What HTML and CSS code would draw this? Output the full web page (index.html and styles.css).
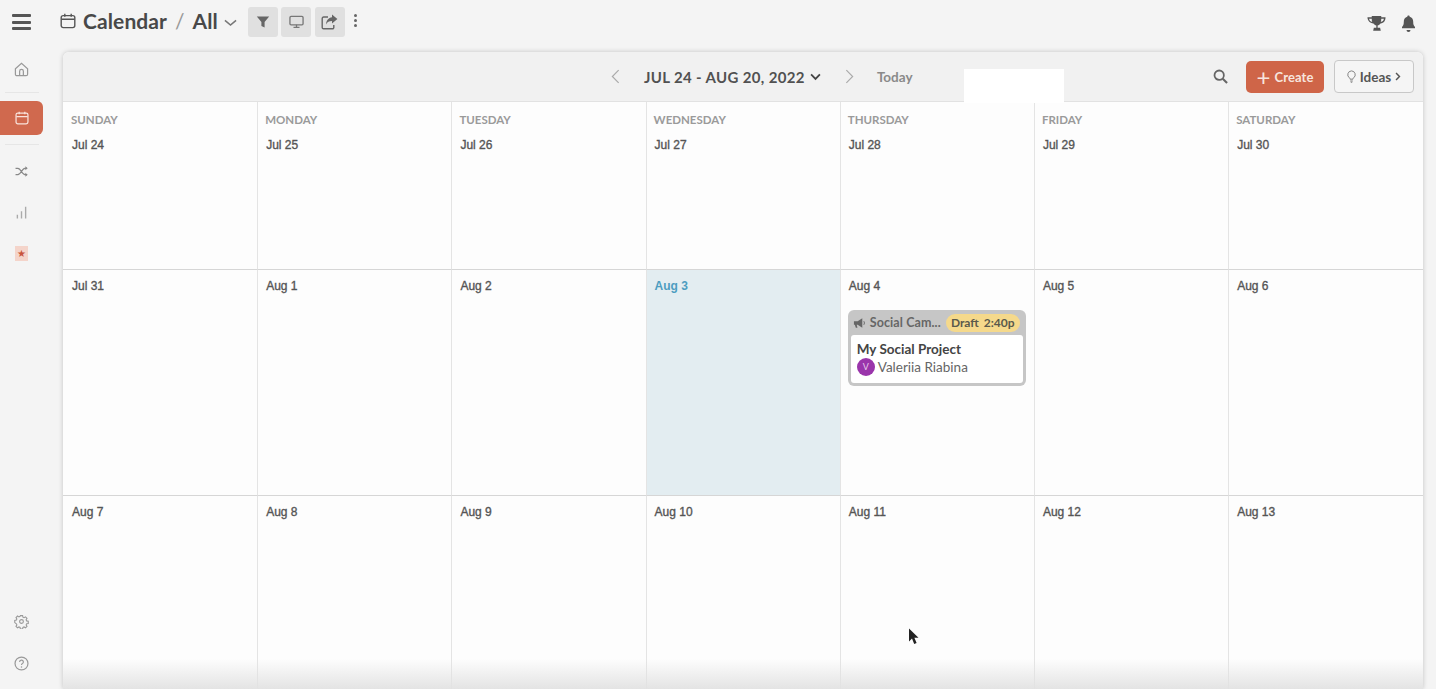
FILE: index.html
```html
<!DOCTYPE html>
<html lang="en">
<head>
<meta charset="utf-8">
<title>Calendar</title>
<link rel="stylesheet" href="styles.css">
</head>
<body>
<div class="app">
  <header class="topbar">
    <button class="burger" aria-label="Menu"><span></span><span></span><span></span></button>
    <svg class="title-icon" viewBox="0 0 16 16" width="16" height="16"><rect x="1.200" y="2.600" width="13.600" height="12" rx="2" fill="none" stroke="#555" stroke-width="1.400"/><path d="M1.500 6.200h13M4.800 .8v3M11.200 .8v3" stroke="#555" stroke-width="1.400" fill="none"/></svg>
    <span class="title">Calendar</span>
    <span class="slash">/</span>
    <span class="title">All</span>
    <svg class="title-chev" viewBox="0 0 14 8" width="13" height="8"><path d="M1 1.200l6 5 6-5" fill="none" stroke="#777" stroke-width="1.700"/></svg>
    <div class="tools">
      <span class="tool"><svg viewBox="0 0 14 14" width="14" height="14"><path d="M.8 1.500h12.400L8.600 7v5.500l-3.200-1.600V7z" fill="#666"/></svg></span>
      <span class="tool"><svg viewBox="0 0 16 14" width="15" height="14"><rect x="1" y="1" width="14" height="9" rx="1.200" fill="none" stroke="#777" stroke-width="1.400"/><path d="M8 10v2.600M4.800 12.800h6.400" stroke="#777" stroke-width="1.400"/></svg></span>
      <span class="tool"><svg viewBox="0 0 17 16" width="17" height="16"><path d="M7 3H2.600A1.400 1.400 0 0 0 1.200 4.400v9A1.400 1.400 0 0 0 2.600 14.800h8.800a1.400 1.400 0 0 0 1.400-1.400V11" fill="none" stroke="#666" stroke-width="1.400"/><path d="M11 .6l5.400 4.400L11 9.400V7C8 7 6.400 8 5 10.400 5.300 6.600 7.500 3.600 11 3.200z" fill="#666"/></svg></span>
    </div>
    <span class="kebab"><i></i><i></i><i></i></span>
    <div class="top-right">
      <svg viewBox="0 0 20 17" width="19" height="17"><path d="M5 .5h10v1.500h4.500c0 3.500-1.500 6-5.300 6.500-.8 1.200-1.800 1.900-3 2.200V13h2.600l.7 3H6.500l.7-3h2.600v-2.300c-1.200-.3-2.200-1-3-2.200C3 8 .5 5.500.5 2H5zM2.200 3.400c.3 1.800 1.400 3 3.300 3.500-.4-1.100-.5-2.300-.5-3.500zm15.600 0H15c0 1.200-.1 2.400-.5 3.500 1.900-.5 3-1.700 3.300-3.500z" fill="#555"/></svg>
      <svg viewBox="0 0 14 17" width="15" height="17"><path d="M7 .6c.7 0 1.200.5 1.200 1.200 2.400.6 3.500 2.500 3.500 5 0 3 .6 4 1.800 5.300v1.200H.5v-1.200C1.700 10.800 2.300 9.800 2.300 6.800c0-2.500 1.100-4.400 3.500-5C5.800 1.100 6.300.6 7 .6zM5 15h4a2 2 0 0 1-4 0z" fill="#555"/></svg>
    </div>
  </header>

  <div class="main">
    <nav class="side">
      <div class="side-top">
        <span class="nav-item home"><svg viewBox="0 0 16 16" width="15" height="15"><path d="M1.500 7.200 8 1.500l6.500 5.700V13a1.600 1.600 0 0 1-1.600 1.600H3.100A1.600 1.600 0 0 1 1.500 13z" fill="none" stroke="#999" stroke-width="1.300"/><path d="M6 14.500V9.800a2 2 0 0 1 4 0v4.700" fill="none" stroke="#999" stroke-width="1.300"/></svg></span>
        <span class="rule"></span>
        <span class="nav-item active"><svg viewBox="0 0 16 16" width="14" height="14"><rect x="1.200" y="2.400" width="13.600" height="12.200" rx="2" fill="none" stroke="#f9e3dc" stroke-width="1.400"/><path d="M1.500 6.300h13M4.800 .8v3M11.200 .8v3" stroke="#f9e3dc" stroke-width="1.400" fill="none"/></svg></span>
        <span class="rule rule-low"></span>
        <span class="nav-item"><svg viewBox="0 0 14 12" width="13" height="11"><path d="M.5 2.500h2.600c3 0 4.600 7 7.600 7h2.300M.5 9.500h2.600c3 0 4.600-7 7.600-7h2.300" fill="none" stroke="#888" stroke-width="1.400"/><path d="M11.200.4l2.600 2.100-2.600 2.100zM11.200 7.400l2.600 2.100-2.600 2.100z" fill="#888"/></svg></span>
        <span class="nav-item spaced"><svg viewBox="0 0 12 14" width="11" height="13"><path d="M1.500 9.500v4M6 5.500v8M10.500 .8v12.700" stroke="#aaa" stroke-width="1.500" fill="none"/></svg></span>
        <span class="nav-item spaced"><span class="star-box">★</span></span>
      </div>
      <div class="side-bottom">
        <span class="nav-item"><svg viewBox="0 0 16 16" width="15" height="15"><path d="M6.700 1h2.600l.4 1.900 1.300.6 1.700-1 1.800 1.800-1 1.700.6 1.300 1.900.4v2.600l-1.900.4-.6 1.300 1 1.700-1.800 1.800-1.700-1-1.300.6-.4 1.900H6.700l-.4-1.900-1.300-.6-1.700 1-1.800-1.800 1-1.700-.6-1.300L0 9.300V6.700l1.900-.4.600-1.300-1-1.700 1.800-1.800 1.700 1 1.300-.6z" transform="translate(.8 .8) scale(.9)" fill="none" stroke="#999" stroke-width="1.300"/><circle cx="8" cy="8" r="2" fill="none" stroke="#999" stroke-width="1.200"/></svg></span>
        <span class="nav-item"><svg viewBox="0 0 16 16" width="15" height="15"><circle cx="8" cy="8" r="6.900" fill="none" stroke="#999" stroke-width="1.300"/><path d="M6 6.300A2 2 0 1 1 8.700 8.200C8.100 8.500 8 8.900 8 9.600" fill="none" stroke="#999" stroke-width="1.300"/><circle cx="8" cy="11.600" r=".8" fill="#999"/></svg></span>
      </div>
    </nav>

    <section class="panel">
      <div class="toolbar">
        <div class="range">
          <svg viewBox="0 0 10 16" width="9" height="15"><path d="M8.500 1 1.500 8l7 7" fill="none" stroke="#aaa" stroke-width="1.300"/></svg>
          <span class="range-label">JUL 24 - AUG 20, 2022</span>
          <svg class="range-chev" viewBox="0 0 12 8" width="11" height="8"><path d="M1.200 1.200 6 6l4.800-4.800" fill="none" stroke="#444" stroke-width="2"/></svg>
          <svg class="range-next" viewBox="0 0 10 16" width="9" height="15"><path d="M1.500 1l7 7-7 7" fill="none" stroke="#aaa" stroke-width="1.300"/></svg>
          <span class="today">Today</span>
        </div>
        <div class="actions">
          <svg viewBox="0 0 16 16" width="15" height="15"><circle cx="6.600" cy="6.600" r="5" fill="none" stroke="#666" stroke-width="1.900"/><path d="M10.400 10.400 15 15" stroke="#666" stroke-width="2.200"/></svg>
          <button class="btn-create"><span class="plus">+</span>Create</button>
          <button class="btn-ideas"><svg viewBox="0 0 10 14" width="9" height="13"><path d="M5 .8a4.200 4.200 0 0 0-2.400 7.600c.5.400.7 1 .8 1.600h3.200c.1-.6.300-1.200.8-1.600A4.200 4.200 0 0 0 5 .8zM3.600 12h2.800M4.200 13.400h1.600" fill="none" stroke="#777" stroke-width="1"/></svg>Ideas<svg viewBox="0 0 7 10" width="6" height="9"><path d="M1.200 1 5.200 5l-4 4" fill="none" stroke="#555" stroke-width="1.700"/></svg></button>
        </div>
      </div>
      <div class="grid">
        <div class="cell first"><div class="dow">SUNDAY</div><div class="date">Jul 24</div></div>
        <div class="cell first"><div class="dow">MONDAY</div><div class="date">Jul 25</div></div>
        <div class="cell first"><div class="dow">TUESDAY</div><div class="date">Jul 26</div></div>
        <div class="cell first"><div class="dow">WEDNESDAY</div><div class="date">Jul 27</div></div>
        <div class="cell first"><div class="dow">THURSDAY</div><div class="date">Jul 28</div></div>
        <div class="cell first"><div class="dow">FRIDAY</div><div class="date">Jul 29</div></div>
        <div class="cell first"><div class="dow">SATURDAY</div><div class="date">Jul 30</div></div>

        <div class="cell"><div class="date">Jul 31</div></div>
        <div class="cell"><div class="date">Aug 1</div></div>
        <div class="cell"><div class="date">Aug 2</div></div>
        <div class="cell today-cell"><div class="date">Aug 3</div></div>
        <div class="cell">
          <div class="date">Aug 4</div>
          <article class="event">
            <div class="event-head">
              <svg viewBox="0 0 14 12" width="13" height="12"><path d="M1 4h4l5-3v10L5 8H4l.8 3H3L2 8H1z" fill="#666"/><path d="M11.500 4c1 .6 1 3.400 0 4" fill="none" stroke="#666" stroke-width="1"/></svg>
              <span class="event-name">Social Cam...</span>
              <span class="event-pill"><span>Draft</span><span>2:40p</span></span>
            </div>
            <div class="event-body">
              <div class="event-title">My Social Project</div>
              <div class="event-user"><span class="avatar">V</span>Valeriia Riabina</div>
            </div>
          </article>
        </div>
        <div class="cell"><div class="date">Aug 5</div></div>
        <div class="cell"><div class="date">Aug 6</div></div>

        <div class="cell"><div class="date">Aug 7</div></div>
        <div class="cell"><div class="date">Aug 8</div></div>
        <div class="cell"><div class="date">Aug 9</div></div>
        <div class="cell"><div class="date">Aug 10</div></div>
        <div class="cell"><div class="date">Aug 11</div></div>
        <div class="cell"><div class="date">Aug 12</div></div>
        <div class="cell"><div class="date">Aug 13</div></div>
      </div>
      <div class="white-patch"></div>
      <div class="fade"></div>
    </section>
  </div>
  <svg class="cursor" viewBox="0 0 12 18" width="12" height="18"><path d="M1 .5v13l3-3 2.200 5.500 2.400-1-2.200-5.200H10.500z" fill="#222"/></svg>
</div>
</body>
</html>
```
FILE: styles.css
```css
* { box-sizing: border-box; }
html, body { margin: 0; height: 100%; overflow: hidden; }
body { background: #f4f4f4; font-family: Lato, "Liberation Sans", sans-serif; color: #444; }
button { font-family: inherit; cursor: pointer; }
.app { position: relative; height: 689px; display: flex; flex-direction: column; overflow: hidden; }

.topbar { height: 52px; flex: none; display: flex; align-items: flex-start; padding: 7px 12px 0 12px; }
.burger { width: 19px; height: 16px; margin: 7px 29px 0 0; padding: 0; border: 0; background: none; display: flex; flex-direction: column; justify-content: space-between; flex: none; }
.burger span { display: block; height: 3px; border-radius: 1px; background: #555; }
.title-icon { margin: 6px 7px 0 0; flex: none; width: 16px; height: 16px; }
.title { font-size: 21px; font-weight: 700; line-height: 28px; color: #484848; letter-spacing: .1px; }
.slash { font-size: 21px; line-height: 28px; color: #999; margin: 0 8px; }
.title-chev { margin: 12px 0 0 6px; flex: none; }
.tools { display: flex; gap: 3.5px; margin-left: 11px; }
.tool { width: 30px; height: 30px; background: #e0e0e0; border-radius: 3px; display: flex; align-items: center; justify-content: center; }
.kebab { margin: 7px 0 0 9.5px; display: flex; flex-direction: column; gap: 2px; }
.kebab i { display: block; width: 3px; height: 3px; border-radius: 50%; background: #666; }
.top-right { margin-left: auto; display: flex; gap: 15px; padding: 8px 8px 0 0; }

.main { flex: 1; display: flex; min-height: 0; }
.side { width: 63px; flex: none; display: flex; flex-direction: column; justify-content: space-between; padding-bottom: 11px; }
.side-top, .side-bottom { display: flex; flex-direction: column; }
.side-bottom { gap: 12px; }
.nav-item { width: 43px; height: 30px; display: flex; align-items: center; justify-content: center; }
.nav-item.home { margin-top: 2px; }
.nav-item.spaced { margin-top: 11px; }
.nav-item.active { height: 34px; background: #d0694e; border-radius: 0 6px 6px 0; }
.rule { width: 34px; height: 1px; margin: 8px 0 8px 5px; background: #e6e6e6; }
.rule-low { margin: 9px 0 11px 5px; }
.star-box { width: 13px; height: 15px; background: #f4d4ca; color: #c9543c; font-size: 10px; line-height: 15px; text-align: center; }

.panel { position: relative; width: 1360px; flex: none; background: #fdfdfd; border-radius: 6px 6px 0 0; box-shadow: 0 0 5px rgba(0,0,0,.2); display: flex; flex-direction: column; overflow: hidden; }
.toolbar { height: 50px; flex: none; background: #f1f1f1; border-bottom: 1px solid #e2e2e2; display: flex; align-items: center; position: relative; }
.range { display: flex; align-items: center; margin-left: 548px; }
.range-label { font-size: 15px; font-weight: 700; color: #515151; margin-left: 24px; letter-spacing: .35px; }
.range-chev { margin-left: 5px; }
.range-next { margin-left: 24px; }
.today { font-size: 13.5px; color: #8a8a8a; margin-left: 23px; font-weight: 700; }
.actions { margin-left: auto; display: flex; align-items: center; padding-right: 9px; }
.btn-create { height: 32px; width: 78px; margin-left: 18px; border: 0; border-radius: 5px; background: #cf6548; color: #f7e5df; font-size: 13px; font-weight: 700; padding: 0; display: flex; align-items: center; justify-content: center; gap: 4px; letter-spacing: .1px; }
.plus { font-size: 24px; line-height: 20px; font-weight: 400; }
.btn-ideas { height: 33px; width: 80px; margin-left: 10px; border: 1px solid #c8c8c8; border-radius: 4px; background: #f5f5f5; color: #555; font-size: 13.5px; font-weight: 700; padding: 0; display: flex; align-items: center; justify-content: center; gap: 4px; }

.grid { flex: 1; display: grid; grid-template-columns: repeat(6, 194.2px) 1fr; grid-template-rows: 168px 226px 1fr; background: #fdfdfd; }
.cell { border-left: 1px solid #e4e4e4; border-bottom: 1px solid #d6d6d6; padding: 9px 7px; min-width: 0; }
.cell.first { padding-top: 10px; }
.cell:nth-child(7n+1) { border-left: 0; padding-left: 8px; }
.cell:nth-child(n+15) { border-bottom: 0; }
.dow { font-size: 11.5px; font-weight: 700; color: #9a9a9a; line-height: 15px; margin-bottom: 11px; }
.date { font-family: "Liberation Sans", Arial, sans-serif; font-size: 12px; color: #555; line-height: 14px; -webkit-text-stroke: .35px #555; padding-left: 1px; }
.today-cell { background: #e3edf1; }
.today-cell .date { color: #4d9dc0; font-weight: 700; -webkit-text-stroke: 0; }

.event { margin-top: 17px; width: 178px; height: 76px; background: #c6c6c6; border-radius: 6px; padding: 0 3px 3px; display: flex; flex-direction: column; }
.event-head { height: 25px; flex: none; display: flex; align-items: center; padding-left: 2px; font-size: 12.5px; color: #666; font-weight: 700; }
.event-head svg { flex: none; }
.event-name { margin-left: 4px; white-space: nowrap; letter-spacing: .1px; }
.event-pill { margin-left: auto; margin-right: 3px; height: 18px; width: 74px; border-radius: 9px; background: #f5d98b; color: #5a5a4c; display: flex; align-items: center; justify-content: center; gap: 5px; font-size: 12px; font-weight: 700; }
.event-body { flex: 1; background: #fff; border-radius: 3px; padding: 6px 6px; }
.event-title { font-size: 13.5px; line-height: 17px; font-weight: 700; color: #444; }
.event-user { display: flex; align-items: center; gap: 3px; font-size: 13.5px; line-height: 18px; color: #666; }
.avatar { width: 18px; height: 18px; flex: none; border-radius: 50%; background: #9a35ab; color: #e6c9ea; font-size: 9px; display: flex; align-items: center; justify-content: center; }

.white-patch { position: absolute; left: 901px; top: 17px; width: 100px; height: 34px; background: #fff; }
.fade { position: absolute; left: 0; right: 0; bottom: 0; height: 30px; background: linear-gradient(to bottom, rgba(230,230,230,0), rgba(226,226,226,.95)); pointer-events: none; }
.cursor { position: absolute; left: 908px; top: 628px; }
```
